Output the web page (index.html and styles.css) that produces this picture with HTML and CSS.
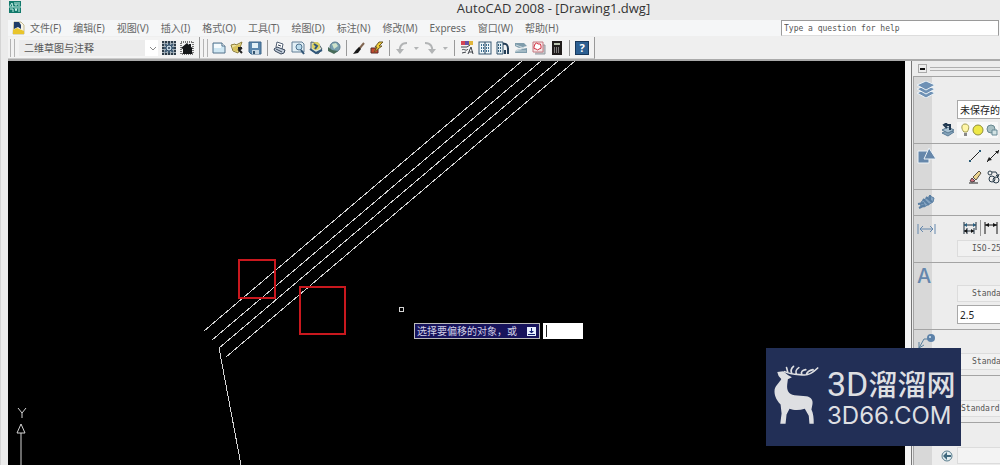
FILE: index.html
```html
<!DOCTYPE html>
<html lang="zh-CN">
<head>
<meta charset="utf-8">
<title>AutoCAD 2008 - [Drawing1.dwg]</title>
<link rel="stylesheet" href="styles.css">
</head>
<body>
<div class="app">
  <header class="titlebar">
    <svg class="app-logo" width="12" height="12" viewBox="0 0 12 12"><rect width="12" height="12" fill="#12796b"/><path d="M1 5l2-3 1 4M6 1v3h2V1M10 1v4M1 8h3v3M6 7l1 3 1-3M10 7v4M0 6h12" stroke="#c5eee4" fill="none"/></svg>
    <h1 class="title">AutoCAD 2008 - [Drawing1.dwg]</h1>
  </header>

  <nav class="menubar">
    <svg class="menu-logo" width="13" height="14" viewBox="0 0 13 14"><path d="M2 1h7l3 3v9H1z" fill="#f7f4e8" stroke="#c4bb93"/><path d="M2 1h5l2 3v4L6 6 2 8z" fill="#203c68"/><path d="M1 9l4-2 7 3v3H1z" fill="#e9c52c"/></svg>
    <div class="menus">
      <button class="menu">文件(F)</button>
      <button class="menu">编辑(E)</button>
      <button class="menu">视图(V)</button>
      <button class="menu">插入(I)</button>
      <button class="menu">格式(O)</button>
      <button class="menu">工具(T)</button>
      <button class="menu">绘图(D)</button>
      <button class="menu">标注(N)</button>
      <button class="menu">修改(M)</button>
      <button class="menu">Express</button>
      <button class="menu">窗口(W)</button>
      <button class="menu">帮助(H)</button>
    </div>
    <input class="help-box" type="text" aria-label="Help search" placeholder="Type a question for help">
  </nav>

  <div class="toolbars">
    <div class="toolbar toolbar-workspace">
      <span class="grip"></span>
      <select class="workspace" aria-label="工作空间"><option>二维草图与注释</option></select>
      <button class="tool" aria-label="工作空间设置"><svg width="14" height="14" viewBox="0 0 14 14"><path d="M0 0h14v14H0z" fill="#a9b4bc"/><path d="M0 1h14M0 13h14M1 0v14M13 0v14" stroke="#2f3d49" stroke-width="2" stroke-dasharray="2 1"/><path d="M3 3l8 8M11 3l-8 8M7 2v10M2 7h10" stroke="#3f5b74" stroke-width="2"/><circle cx="7" cy="7" r="3" fill="#c4d6e2" stroke="#33506a"/><circle cx="7" cy="7" r="1" fill="#24394f"/></svg></button>
      <button class="tool" aria-label="我的工作空间"><svg width="14" height="14" viewBox="0 0 14 14"><path d="M1 1h12v12H1z" fill="none" stroke="#777" stroke-width="2" stroke-dasharray="1 1"/><path d="M1 7l6-5 2 2V3h2v3l2 1-1 1v5H3V8z" fill="#151719"/></svg></button>
    </div>
    <div class="toolbar toolbar-standard">
      <span class="grip"></span>
      <button class="tool" aria-label="新建"><svg width="14" height="14" viewBox="0 0 14 14"><path d="M1 2h9l3 3v7H1z" fill="#cfe7f3" stroke="#55728b"/><path d="M2 3h7v4H2z" fill="#f5fbfd"/><path d="M10 2v3h3" fill="#fff" stroke="#55728b"/></svg></button>
      <button class="tool" aria-label="打开"><svg width="14" height="14" viewBox="0 0 14 14"><path d="M1 4l4-1 1 1 6-3-4 11-5-2z" fill="#eee3a0" stroke="#8c7c39"/><path d="M3 6l8-3-4 8-4-2z" fill="#d8c25c"/><path d="M8 7h4M12 7l-3 2 3 3" stroke="#222" stroke-width="2" fill="none"/></svg></button>
      <button class="tool" aria-label="保存"><svg width="14" height="14" viewBox="0 0 14 14"><path d="M1 1h12v12H3l-2-2z" fill="#5b87ad" stroke="#3d6588"/><path d="M4 2h6v5H4z" fill="#e3f1f7"/><path d="M4 9h7v4H4z" fill="#c5d6e2"/><path d="M5 10h2v3H5z" fill="#34546f"/></svg></button>
      <span class="sep"></span>
      <button class="tool" aria-label="打印"><svg width="14" height="14" viewBox="0 0 14 14"><path d="M3 6l1-5 6 2-1 5" fill="#fff" stroke="#536174"/><path d="M1 8l3-2 8 3-1 3-3 1-6-3z" fill="#c3cedb" stroke="#38465a"/><path d="M3 8l6 3M5 4l3 1" stroke="#38465a"/></svg></button>
      <button class="tool" aria-label="打印预览"><svg width="14" height="14" viewBox="0 0 14 14"><path d="M1 1h10l2 2v8H1z" fill="#e2eff5" stroke="#637f96"/><circle cx="8" cy="6" r="3" fill="#badbec" stroke="#50728e"/><path d="M10 9l3 4" stroke="#315575" stroke-width="2"/></svg></button>
      <button class="tool" aria-label="发布"><svg width="14" height="14" viewBox="0 0 14 14"><path d="M2 1l7 1 4 6-4 5-7-4z" fill="#dce5d9" stroke="#53636d"/><circle cx="7" cy="5" r="4" fill="#ddd061"/><path d="M5 3l3 2-2 3M1 8l6 4 6-3" stroke="#31577a" fill="none" stroke-width="2"/></svg></button>
      <button class="tool" aria-label="三维 DWF"><svg width="14" height="14" viewBox="0 0 14 14"><circle cx="8" cy="6" r="5" fill="#789fae" stroke="#5c7d90"/><path d="M5 3l4-1 2 3-4 3z" fill="#cfe3cb"/><path d="M1 6l4 3 6 1-4 3-6-3z" fill="#476b59"/></svg></button>
      <span class="sep"></span>
      <button class="tool" aria-label="特性匹配"><svg width="14" height="14" viewBox="0 0 14 14"><path d="M12 2L7 8" stroke="#806550" stroke-width="2"/><path d="M7 6l2 2-3 4-5 1 3-4z" fill="#171717"/></svg></button>
      <button class="tool" aria-label="块编辑器"><svg width="14" height="14" viewBox="0 0 14 14"><path d="M1 7h7v5H1z" fill="#c54b30" stroke="#5b2c29"/><path d="M9 1h4L9 5h3l-8 6 3-5H5z" fill="#f3cf38" stroke="#6b5828"/></svg></button>
      <span class="sep"></span>
      <button class="tool tool-split" aria-label="放弃"><svg width="25" height="14" viewBox="0 0 25 14"><path d="M12 2C6 2 4 6 5 12" fill="none" stroke="#b2b4b5" stroke-width="2"/><path d="M1 8l4 5 4-5zM19 6h5l-3 3z" fill="#b2b4b5"/></svg></button>
      <button class="tool tool-split" aria-label="重做"><svg width="25" height="14" viewBox="0 0 25 14"><path d="M1 2c6 0 8 4 7 9" fill="none" stroke="#b2b4b5" stroke-width="2"/><path d="M4 8h8l-4 5zM19 6h5l-3 3z" fill="#b2b4b5"/></svg></button>
      <span class="sep"></span>
      <button class="tool" aria-label="特性"><svg width="14" height="14" viewBox="0 0 14 14"><path d="M1 0h4v4H1z" fill="#d44453"/><path d="M5 0h4v4H5z" fill="#6650a4"/><path d="M9 0h4v4H9z" fill="#e0b53b"/><path d="M1 6h6l3-2M2 9c2-2 4 2 6-1M2 12l4-1M8 13l3-7 2 7M9 11h4" stroke="#3d4147" fill="none"/></svg></button>
      <button class="tool" aria-label="设计中心"><svg width="14" height="14" viewBox="0 0 14 14"><rect x="1" y="1" width="12" height="12" fill="#edf6fa" stroke="#3a5a75"/><path d="M7 1v12" stroke="#24425c"/><path d="M3 4h3M3 7h3M3 10h3M8 4h3M8 7h3M8 10h3" stroke="#3f6e91" stroke-width="2" stroke-dasharray="1 1"/></svg></button>
      <button class="tool" aria-label="工具选项板"><svg width="14" height="14" viewBox="0 0 14 14"><path d="M1 1h6v12H1z" fill="#dfecf2" stroke="#31536d"/><path d="M2 4h4M2 7h4M2 10h4" stroke="#315b79" stroke-width="2" stroke-dasharray="1 1"/><path d="M7 3c4-1 5 2 5 5M12 7v6M9 9v4" stroke="#243e57" stroke-width="2" fill="none"/></svg></button>
      <button class="tool" aria-label="图纸集"><svg width="14" height="14" viewBox="0 0 14 14"><path d="M1 2h9l3 3-8 2-4-2zM2 9l11-2v5H1z" fill="#7f9cab"/><path d="M2 4l8 3-8 3h10" stroke="#c8d7dd" fill="none"/></svg></button>
      <button class="tool" aria-label="标记集"><svg width="14" height="14" viewBox="0 0 14 14"><path d="M4 4h9v9H3" fill="#c7c9cc" stroke="#959aa1"/><path d="M1 1h10v10H1z" fill="#f6e4e4" stroke="#c57880"/><path d="M3 3q2-2 3 0 3-1 3 2 1 3-2 3-1 2-3 0-3 0-2-2z" fill="#fff" stroke="#d33142"/></svg></button>
      <button class="tool" aria-label="快速计算器"><svg width="14" height="14" viewBox="0 0 14 14"><path d="M2 0h10v14H2z" fill="#201c1b"/><path d="M4 2h6v2H4z" fill="#b9c3ae"/><path d="M4 7h6M4 9h6M4 11h6" stroke="#ddd" stroke-dasharray="1 1"/></svg></button>
      <span class="sep"></span>
      <button class="tool tool-help" aria-label="帮助">?</button>
    </div>
  </div>

  <main class="workspace-area">
    <section class="canvas" aria-label="Drawing1.dwg">
      <svg class="drawing" width="897" height="404" viewBox="0 0 897 404" fill="none" stroke="#d4d4d4">
        <path d="M514 0L196 270M533 0L204 279M550 0L211 287L233 404M567 0L218 296" shape-rendering="crispEdges"/>
        <path d="M231 199h36v38h-36zM292 226h45v47h-45z" stroke="#c9181e" stroke-width="2"/>
        <path d="M391 246h4v4h-4z" shape-rendering="crispEdges"/>
        <path d="M13 404V372M9 372l4-9 4 9zM10 347l4 5 4-5M14 352v5"/>
      </svg>
      <div class="prompt">
        <label class="prompt-label" for="command"><span>选择要偏移的对象，或</span><svg width="9" height="9" viewBox="0 0 9 9"><path d="M0 0h9v9H0z" fill="#e8f0ff"/><path d="M4 1h1v3h2L5 6H4L2 4h2zM1 7h7v1H1z" fill="#152070"/></svg></label>
        <input class="prompt-input" id="command" type="text" autocomplete="off">
      </div>
    </section>

    <aside class="dashboard">
      <div class="dash-head"><button class="collapse" aria-label="折叠"></button><span class="dash-grip"></span></div>
      <section class="group group-layers">
        <div class="rail"><svg width="18" height="17" viewBox="0 0 18 17" fill="#6f91b5" stroke="#eef3f7"><path d="M0 12l9-4 9 4-9 5z"/><path d="M0 8l9-4 9 4-9 5z"/><path d="M0 4l9-4 9 4-9 5z"/></svg></div>
        <div class="controls">
          <input class="field" aria-label="图层状态" type="text" value="未保存的">
          <div class="layer-icons">
            <svg width="14" height="14" viewBox="0 0 14 14"><path d="M1 10l6-3 6 2-6 4z" fill="#83a2b9" stroke="#5b7c97"/><path d="M1 7l6-3 6 3-6 3z" fill="#a9c2d3" stroke="#587991"/><path d="M9 7V2H5M6 0L3 2l3 3" stroke="#203850" stroke-width="2" fill="none"/></svg>
            <div class="swatches"><svg width="9" height="14" viewBox="0 0 9 14"><path d="M3 9C0 6 0 1 4 1S9 5 6 9z" fill="#fff6a8" stroke="#a19c50"/><path d="M3 10h3v3H3z" fill="#888"/></svg><svg width="12" height="14" viewBox="0 0 12 14"><circle cx="6" cy="7" r="5" fill="#eee847" stroke="#8d8c3d"/></svg><svg width="12" height="14" viewBox="0 0 12 14"><circle cx="5" cy="6" r="4" fill="#a9c0c4" stroke="#67878f"/><path d="M6 7h5v5H6z" fill="#d3e3e4" stroke="#668895"/></svg></div>
          </div>
        </div>
      </section>
      <section class="group group-draw">
        <div class="rail"><svg width="19" height="16" viewBox="0 0 19 16"><path d="M1 3h11v12H1z" fill="#6687aa" stroke="#edf3f7"/><path d="M12 0l7 11H7z" fill="#6687aa" stroke="#edf3f7"/></svg></div>
        <div class="controls draw-tools">
          <svg width="14" height="14" viewBox="0 0 14 14"><path d="M2 12L12 2" stroke="#222"/><path d="M1 11h2v2H1zM11 1h2v2h-2z" fill="#285a76"/></svg>
          <svg width="14" height="14" viewBox="0 0 14 14"><path d="M1 13L13 1" stroke="#222"/><path d="M3 8l3 3-5 1zM13 2l-4 0 3 3z" fill="#222"/></svg>
          <svg width="14" height="14" viewBox="0 0 14 14"><path d="M5 7l6-6 2 2-5 7z" fill="#ecd590" stroke="#5b5140"/><path d="M4 8l3 3-3 1-2-1z" fill="#d57481" stroke="#543b40"/><path d="M1 13h9" stroke="#222"/></svg>
          <svg width="14" height="14" viewBox="0 0 14 14" fill="none" stroke="#283b49"><circle cx="4" cy="3" r="2"/><circle cx="6" cy="9" r="3"/><circle cx="10" cy="10" r="3"/><path d="M6 2h4l2 4M10 5l2 2 1-3"/></svg>
        </div>
      </section>
      <section class="group group-nav">
        <div class="rail"><svg width="18" height="16" viewBox="0 0 18 16"><path d="M5 7l8-5 4 2-1 4-9 5-4-2z" fill="#86a5c2" stroke="#5a7fa3"/><path d="M1 10l6-1M6 5l6 6M9 3l6 5M2 14l6-3M13 1v5" stroke="#5a7fa3" stroke-width="2"/></svg></div>
      </section>
      <section class="group group-dim">
        <div class="rail"><svg width="19" height="10" viewBox="0 0 19 10"><path d="M1 0v10M18 0v10M3 5h13M6 2L3 5l3 3M13 2l3 3-3 3" fill="none" stroke="#6588ad"/></svg></div>
        <div class="controls">
          <div class="dim-icons"><svg width="14" height="14" viewBox="0 0 14 14"><path d="M1 1v12M13 1v8M1 4h12M4 7v6M11 7v6M1 10h10" stroke="#1d2d3b"/><path d="M1 4l3-2v4zM13 4l-3-2v4z" fill="#285f81"/><path d="M1 10l3-2v4zM11 10L8 8v4z" fill="#111"/></svg><span class="sep"></span><svg width="14" height="14" viewBox="0 0 14 14"><path d="M1 1v12M13 1v12M1 4h12" stroke="#151515"/><path d="M1 4l4-2v4zM13 4L9 2v4z" fill="#151515"/></svg></div>
          <button class="flat-field">ISO-25</button>
        </div>
      </section>
      <section class="group group-text">
        <div class="rail rail-letter">A</div>
        <div class="controls"><button class="flat-field">Standard</button><input class="field" aria-label="文字高度" type="text" value="2.5"></div>
      </section>
      <section class="group group-leader">
        <div class="rail"><svg width="19" height="15" viewBox="0 0 19 15"><path d="M2 14l5-9h5M2 8v6l5-3" fill="none" stroke="#587f9d"/><circle cx="14" cy="4" r="4" fill="#5d82a9"/><circle cx="13" cy="3" r="1" fill="#d8e8f4"/></svg></div>
        <div class="controls"><button class="flat-field">Standard</button></div>
      </section>
      <section class="group group-table">
        <div class="rail"></div>
        <div class="controls"><button class="flat-field flat-tight">Standard</button></div>
      </section>
      <section class="group group-last">
        <div class="rail"></div>
        <div class="controls"><div class="last-row"><svg width="12" height="12" viewBox="0 0 12 12"><circle cx="6" cy="6" r="5" fill="#e3edf0" stroke="#5b7f8f"/><path d="M2 6l4-4v3h4v2H6v3z" fill="#3f687d"/></svg><span class="blank"></span></div></div>
      </section>
    </aside>

    <div class="watermark">
      <svg class="deer" width="47" height="61" viewBox="36 76 140 184"><path d="M48 97L66 95L80 106L92 113L80 119L78 135C76 152 82 165 100 167L135 170C150 172 157 182 154 195L151 210C157 222 158 235 158 253L145 253L143 229L131 208C115 213 98 213 85 208L76 225L73 253L57 253L61 222L58 195C44 181 38 165 40 150C44 135 56 128 60 118L52 109Z" fill="#dedfe2"/><path d="M70 96C90 106 115 104 128 106C145 107 158 97 170 85M80 99L76 84M92 102C88 94 90 86 97 80M106 104C102 96 106 88 113 84M122 104C118 96 124 92 134 90M136 104C138 96 146 92 156 90" fill="none" stroke="#dedfe2" stroke-width="5" stroke-linecap="round"/></svg>
      <div class="brand"><strong class="brand-name"><span class="brand-latin">3D</span>溜溜网</strong><span class="brand-url">3D66.COM</span></div>
    </div>
  </main>
</div>
</body>
</html>
```
FILE: styles.css
```css
* { box-sizing: border-box; }
body {
  margin: 0;
  background: #ebebeb;
  color: #333;
  font-family: "Noto Sans", "Noto Sans CJK SC", sans-serif;
  font-size: 11px;
}
button, input, select {
  margin: 0;
  padding: 0;
  border: 0;
  border-radius: 0;
  background: none;
  color: inherit;
  font: inherit;
}
svg { display: block; flex: none; }
.app {
  display: flex;
  flex-direction: column;
  min-height: 100vh;
  overflow: hidden;
  padding-left: 7px;
  border-left: 1px solid #d4d4d4;
}

/* Title bar */
.titlebar { display: flex; align-items: flex-start; height: 20px; }
.app-logo { margin: 1px 0 0 1px; }
.title {
  flex: 1;
  margin: 0;
  padding-left: 86px;
  text-align: center;
  font-family: "Open Sans", sans-serif;
  font-size: 13px;
  font-weight: 400;
  line-height: 17px;
}

/* Menu bar */
.menubar { display: flex; align-items: stretch; height: 16px; background: #f5f6f7; color: #666; }
.menu-logo { margin: 1px 5px 0 4px; }
.menus { display: flex; flex: 1; gap: 12px; }
.menu { white-space: nowrap; line-height: 16px; font-size: 10px; }
.help-box {
  width: 218px;
  margin-right: 1px;
  padding-left: 2px;
  border: 1px solid #9a9a9a;
  border-bottom-color: #ddd;
  background: #fff;
  font: 8px "DejaVu Sans Mono", monospace;
}
.help-box::placeholder { color: #555; opacity: 1; }

/* Toolbars */
.toolbars { display: flex; height: 25px; padding-top: 1px; background: #efefef; border-bottom: 2px solid #aaa; }
.toolbar {
  display: flex;
  align-items: center;
  gap: 4px;
  height: 22px;
  background: #f3f3f3;
  border-right: 1px solid #999;
  border-bottom: 1px solid #ccc;
}
.toolbar-workspace { padding: 0 5px 0 2px; }
.toolbar-standard { padding: 0 5px 0 3px; }
.grip { width: 5px; height: 18px; border: 1px solid #b4b4b4; border-width: 0 1px; }
.workspace {
  appearance: none;
  width: 139px;
  height: 16px;
  padding-left: 5px;
  color: #555;
  font-size: 10px;
  line-height: 16px;
  background: #ececec linear-gradient(#fff, #fff) right / 13px 16px no-repeat;
  background-image: url("data:image/svg+xml,%3Csvg xmlns='http://www.w3.org/2000/svg' width='13' height='16'%3E%3Cpath d='M0 0h13v16H0z' fill='%23fff'/%3E%3Cpath d='M5 7l3 3 3-3' fill='none' stroke='%23888'/%3E%3C/svg%3E");
}
.tool { flex: none; width: 14px; height: 14px; }
.tool-split { width: 25px; }
.tool-help {
  border: 1px solid #17385c;
  background: #2c5f92;
  color: #fff;
  font-size: 11px;
  font-weight: 700;
  line-height: 12px;
  text-align: center;
}
.sep { flex: none; width: 1px; height: 16px; margin: 0 1px; background: #999; }

/* Drawing area */
.workspace-area { position: relative; display: flex; flex: 1; }
.canvas { position: relative; flex: 1; min-width: 0; overflow: hidden; background: #000; }
.drawing { position: absolute; left: 0; top: 0; }
.prompt { position: absolute; left: 406px; top: 262px; display: flex; gap: 3px; }
.prompt-label {
  display: flex;
  align-items: center;
  justify-content: space-between;
  width: 126px;
  height: 16px;
  padding: 0 3px 0 2px;
  border: 1px solid #bbb;
  background: #17135b;
  color: #d0d0e6;
  font-size: 10px;
  line-height: 14px;
}
.prompt-input {
  width: 40px;
  height: 16px;
  padding: 0 4px;
  background: #fff linear-gradient(#222, #222) 3px 2px / 1px 12px no-repeat;
  font-size: 10px;
}

/* Dashboard */
.dashboard {
  display: flex;
  flex-direction: column;
  width: 95px;
  overflow: hidden;
  border-left: 6px solid #f4f4f4;
  background: #ededed;
  box-shadow: inset 1px 0 #777;
  padding-left: 2px;
}
.dash-head { display: flex; align-items: center; gap: 3px; height: 15px; padding-left: 5px; }
.collapse {
  width: 9px;
  height: 9px;
  border: 1px solid #aaa;
  background: linear-gradient(#111, #111) center / 5px 2px no-repeat;
}
.dash-grip { flex: 1; height: 4px; border: 1px solid #b0b0b0; border-width: 1px 0; }
.group { display: flex; border-top: 1px solid #a4a4a4; border-left: 1px solid #a4a4a4; }
.rail { flex: none; width: 18px; padding: 4px 0 0 3px; background: #d8d8d8; }
.rail-letter { padding-top: 0; color: #6587ad; font: 500 20px/26px Inter, sans-serif; }
.controls {
  display: flex;
  flex: 1;
  flex-direction: column;
  justify-content: flex-end;
  align-items: flex-start;
  gap: 3px;
  min-width: 0;
  padding: 0 0 5px 9px;
}
.group-layers { min-height: 67px; }
.group-draw { min-height: 46px; }
.group-nav { min-height: 26px; }
.group-dim { min-height: 47px; }
.group-dim .rail { padding-top: 8px; }
.group-text { min-height: 67px; }
.group-leader { min-height: 46px; }
.group-table { min-height: 47px; }
.group-last { flex: 1; }

.field, .flat-field, .blank { flex: none; width: 80px; margin-left: 16px; }
.field { height: 19px; padding-left: 2px; border: 1px solid #a8a8a8; background: #fff; color: #222; font-size: 10px; }
.flat-field {
  height: 17px;
  padding-left: 14px;
  border: 1px solid #dcdcdc;
  background: #f1f1f1;
  color: #555;
  font: 8px "DejaVu Sans Mono", monospace;
  text-align: left;
}
.flat-tight { padding-left: 3px; }
.layer-icons { display: flex; align-items: center; gap: 2px; }
.swatches { display: flex; align-items: center; gap: 2px; height: 16px; padding-left: 4px; background: #f8f8f8; }
.controls.draw-tools {
  display: grid;
  grid-template-columns: 14px 14px;
  gap: 7px 4px;
  justify-content: start;
  align-content: start;
  padding: 5px 0 0 36px;
}
.dim-icons { display: flex; align-items: center; gap: 2px; margin: 0 0 1px 22px; }
.group-last .controls { justify-content: flex-start; padding-top: 24px; }
.last-row { display: flex; align-items: center; gap: 4px; }
.blank { height: 17px; margin-left: 0; border: 1px solid #dcdcdc; background: #f3f3f3; }

/* Watermark */
.watermark {
  position: absolute;
  top: 287px;
  right: 39px;
  display: flex;
  gap: 7px;
  width: 195px;
  height: 98px;
  padding: 17px 0 0 7px;
  background: #222f56;
  color: #dedfe2;
}
.brand { display: flex; flex-direction: column; white-space: nowrap; }
.brand-name { font: 500 29px/36px "Noto Sans CJK SC", sans-serif; }
.brand-latin { font: 400 34px/36px Roboto, sans-serif; }
.brand-url { font: 400 24px/28px Inter, sans-serif; }
```
